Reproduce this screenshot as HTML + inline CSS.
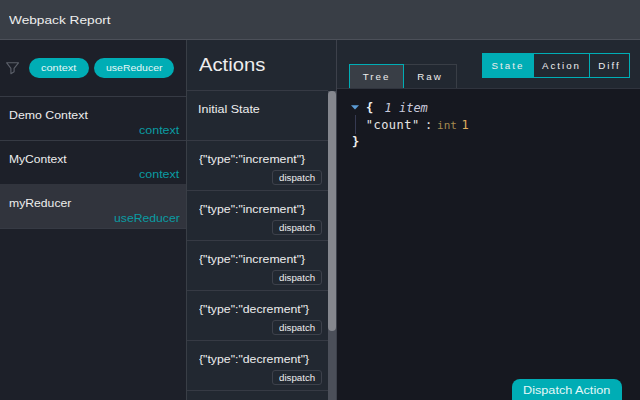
<!DOCTYPE html>
<html lang="en">
<head>
<meta charset="utf-8">
<title>Webpack Report</title>
<style>
*{box-sizing:border-box;margin:0;padding:0}
html,body{width:640px;height:400px;overflow:hidden;background:#222831}
body{position:relative;font-family:"Liberation Sans",sans-serif;color:#eeeeee;font-size:12px}
.abs{position:absolute}
.t{position:absolute;white-space:nowrap;line-height:1;transform-origin:0 0}
#hdr{left:0;top:0;width:640px;height:40px;background:#393e46;border-bottom:1px solid #4c5059}
#side{left:0;top:40px;width:187px;height:360px;background:#1d2029;border-right:1px solid #393e46}
#filter{left:0;top:0;width:186px;height:57px;border-bottom:1px solid #363a44}
.pill{position:absolute;top:18px;height:20px;border-radius:10px;background:#00adb5}
.row{position:absolute;left:0;width:186px;height:44px;border-bottom:1px solid #363a44}
.row.sel{background:#31343d}
#acts{left:187px;top:40px;width:150px;height:360px;background:#222831;border-right:1px solid #3d414b}
.arow{position:absolute;left:0;width:141px;height:50px;border-top:1px solid #363a44}
.btn{position:absolute;left:85px;top:29px;width:50px;height:15px;border:1px solid #3d414b;border-radius:3px}
#track{left:141px;top:51px;width:8px;height:309px;background:#4b4f59}
#thumb{left:141px;top:51px;width:8px;height:240px;background:#85878e;border-radius:4px}
#main{left:337px;top:40px;width:303px;height:360px;background:#222831}
#json{left:0;top:48px;width:303px;height:312px;background:#161820;border-top:1px solid #30343e}
.tab{position:absolute;height:24px;font-size:9.75px;letter-spacing:2px;text-align:center;line-height:24px;color:#eeeeee}
.seg{position:absolute;top:13px;height:25px;border:1px solid #00adb5;font-size:9.75px;letter-spacing:2px;text-align:center;line-height:24px;color:#eeeeee}
.mono{font-family:"DejaVu Sans Mono","Liberation Mono",monospace;font-size:12px}
#dispatch{left:175px;top:339px;width:110px;height:30px;background:#00adb5;border-radius:8px 8px 0 0}
</style>
</head>
<body>
<div id="hdr" class="abs"><span class="t" style="left:9.14px;top:14.05px;font-size:11.75px;transform:scaleX(1.1637);">Webpack Report</span></div>

<div id="side" class="abs">
  <div id="filter" class="abs">
    <svg class="abs" style="left:5px;top:21px" width="16" height="14" viewBox="0 0 16 14"><path d="M1.7 1.8H13.5L9.1 7.3V10.8L5.9 12.7V7.3Z" fill="none" stroke="#5c606a" stroke-width="1.1" stroke-linejoin="round"/></svg>
    <div class="pill" style="left:29px;width:60px"><span class="t" style="left:12.14px;top:5.21px;font-size:9.75px;transform:scaleX(1.123);color:#e4f8f8">context</span></div>
    <div class="pill" style="left:94px;width:80px"><span class="t" style="left:11.68px;top:5.21px;font-size:9.75px;transform:scaleX(1.0737);color:#e4f8f8">useReducer</span></div>
  </div>
  <div class="row" style="top:57px"><span class="t" style="left:8.96px;top:12.05px;font-size:11.75px;transform:scaleX(1.0493);">Demo Context</span><span class="t" style="left:139.28px;top:27.6px;font-size:11.5px;transform:scaleX(1.086);color:#0a9ca3">context</span></div>
  <div class="row" style="top:101px;border-bottom-color:#31343d"><span class="t" style="left:8.96px;top:12.05px;font-size:11.75px;transform:scaleX(1.0274);">MyContext</span><span class="t" style="left:139.28px;top:27.6px;font-size:11.5px;transform:scaleX(1.086);color:#0a9ca3">context</span></div>
  <div class="row sel" style="top:145px"><span class="t" style="left:9.14px;top:12.05px;font-size:11.75px;transform:scaleX(1.0372);">myReducer</span><span class="t" style="left:113.96px;top:27.6px;font-size:11.5px;transform:scaleX(1.0617);color:#0a9ca3">useReducer</span></div>
</div>

<div id="acts" class="abs">
  <span class="t" style="left:12.0px;top:15.76px;font-size:18px;transform:scaleX(1.1226);">Actions</span>
  <div id="track" class="abs"></div>
  <div id="thumb" class="abs"></div>
  <div class="arow" style="top:50px"><span class="t" style="left:11.42px;top:12.05px;font-size:11.75px;transform:scaleX(1.0635);">Initial State</span></div>
  <div class="arow" style="top:100px"><span class="t" style="left:11.5px;top:12.3px;font-size:11.75px;transform:scaleX(1.0448);">{"type":"increment"}</span><div class="btn"><span class="t" style="left:6.0px;top:3.29px;font-size:9.25px;transform:scaleX(1.0511);">dispatch</span></div></div>
  <div class="arow" style="top:150px"><span class="t" style="left:11.5px;top:12.3px;font-size:11.75px;transform:scaleX(1.0448);">{"type":"increment"}</span><div class="btn"><span class="t" style="left:6.0px;top:3.29px;font-size:9.25px;transform:scaleX(1.0511);">dispatch</span></div></div>
  <div class="arow" style="top:200px"><span class="t" style="left:11.5px;top:12.3px;font-size:11.75px;transform:scaleX(1.0448);">{"type":"increment"}</span><div class="btn"><span class="t" style="left:6.0px;top:3.29px;font-size:9.25px;transform:scaleX(1.0511);">dispatch</span></div></div>
  <div class="arow" style="top:250px"><span class="t" style="left:11.5px;top:12.3px;font-size:11.75px;transform:scaleX(1.0436);">{"type":"decrement"}</span><div class="btn"><span class="t" style="left:6.0px;top:3.29px;font-size:9.25px;transform:scaleX(1.0511);">dispatch</span></div></div>
  <div class="arow" style="top:300px"><span class="t" style="left:11.5px;top:12.3px;font-size:11.75px;transform:scaleX(1.0436);">{"type":"decrement"}</span><div class="btn"><span class="t" style="left:6.0px;top:3.29px;font-size:9.25px;transform:scaleX(1.0511);">dispatch</span></div></div>
  <div class="arow" style="top:350px;height:10px"></div>
</div>

<div id="main" class="abs">
  <div class="tab" style="left:12px;top:24px;width:55px;height:24px;background:#393e46;border:1px solid #00adb5;border-bottom:none">Tree</div>
  <div class="tab" style="left:67px;top:24px;width:53px;border:1px solid #393e46;border-left:none;border-bottom:none">Raw</div>
  <div class="seg" style="left:145px;width:52px;background:#00adb5">State</div>
  <div class="seg" style="left:196px;width:57px">Action</div>
  <div class="seg" style="left:252px;width:41px">Diff</div>
  <div id="json" class="abs mono">
    <svg class="abs" style="left:14px;top:16px" width="8" height="5" viewBox="0 0 8 5"><path d="M0 .3h8L4 4.6z" fill="#5b9bd5"/></svg>
    <span class="t" style="left:29px;top:13px;font-weight:bold;color:#eeeeee">{</span>
    <span class="t" style="left:47.5px;top:13px;font-style:italic;color:#c9c9dd">1 item</span>
    <div class="abs" style="left:18px;top:26px;width:1px;height:19px;background:#363a52"></div>
    <span class="t" style="left:28.7px;top:30px;color:#e6e6e6;letter-spacing:.5px">"count"</span>
    <span class="t" style="left:88px;top:30px;color:#e6e6e6">:</span>
    <span class="t" style="left:100.1px;top:31px;font-size:11px;color:#a58a50">int</span>
    <span class="t" style="left:124.4px;top:30px;color:#e0ae5e">1</span>
    <span class="t" style="left:15px;top:47px;font-weight:bold;color:#eeeeee">}</span>
  </div>
  <div id="dispatch" class="abs"><span class="t" style="left:11.1px;top:4.8px;font-size:11.75px;transform:scaleX(1.0778);color:#e4f8f8">Dispatch Action</span></div>
</div>
</body>
</html>
